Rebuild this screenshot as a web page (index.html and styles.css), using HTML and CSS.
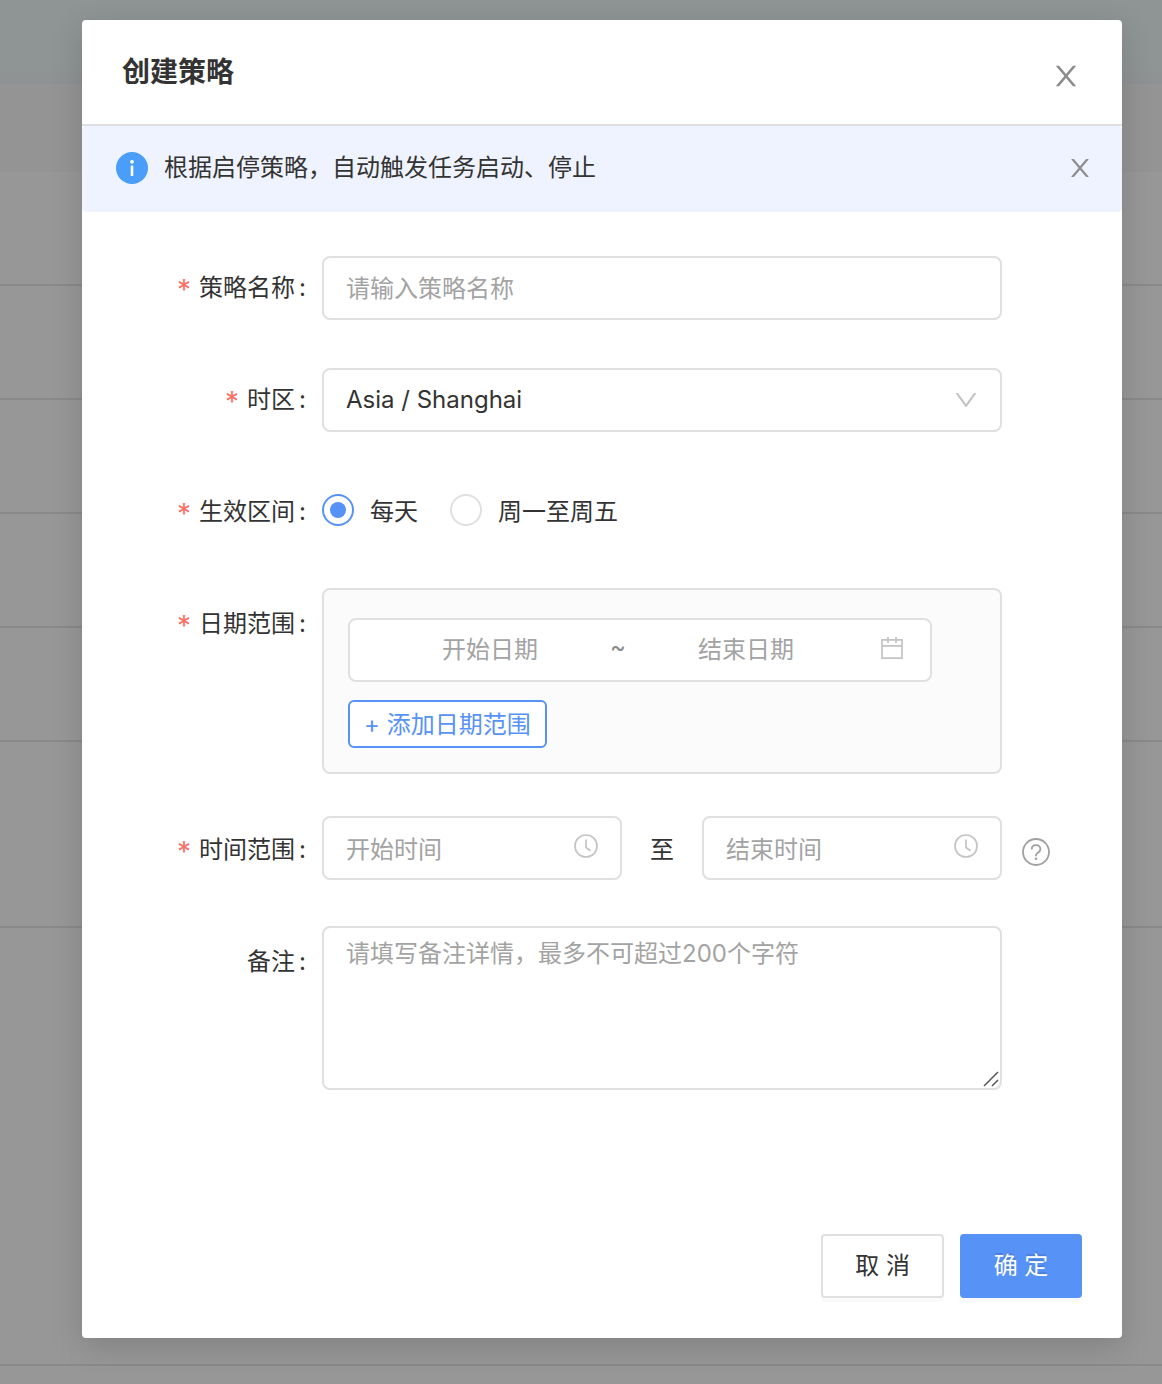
FILE: index.html
```html
<!DOCTYPE html>
<html lang="zh-CN">
<head>
<meta charset="utf-8">
<meta name="viewport" content="width=device-width, initial-scale=1">
<title>创建策略</title>
<link rel="stylesheet" href="styles.css">
</head>
<body>
<svg class="sprite" aria-hidden="true">
  <symbol id="close" viewBox="0 0 1024 1024"><path fill="currentColor" d="M563.8 512l262.5-312.9c4.4-5.2.7-13.1-6.1-13.1h-79.8c-4.7 0-9.2 2.1-12.3 5.7L511.6 449.8 295.1 191.7c-3-3.6-7.5-5.7-12.3-5.7H203c-6.8 0-10.5 7.9-6.1 13.1L459.4 512 196.9 824.9A7.95 7.95 0 0 0 203 838h79.8c4.7 0 9.2-2.1 12.3-5.7l216.5-258.1 216.5 258.1c3 3.6 7.5 5.7 12.3 5.7h79.8c6.8 0 10.5-7.9 6.1-13.1L563.8 512z"/></symbol>
  <symbol id="clock" viewBox="0 0 24 24"><g fill="none" stroke="currentColor" stroke-width="1.7"><circle cx="12" cy="12" r="11"/><path d="M12 5.5v8l4.5 3.2"/></g></symbol>
</svg>

<div class="page" aria-hidden="true">
  <div class="page-top"></div>
  <div class="page-head"></div>
  <div class="page-row"></div>
  <div class="page-row"></div>
  <div class="page-row"></div>
  <div class="page-row"></div>
  <div class="page-row"></div>
  <div class="page-row page-row-tall"></div>
  <div class="page-row page-row-rest"></div>
</div>

<div class="overlay">
  <form class="modal" role="dialog" aria-labelledby="title">
    <header class="modal-header">
      <h1 class="modal-title" id="title">创建策略</h1>
      <button class="icon-button modal-close" type="button" aria-label="关闭"><svg class="icon-large"><use href="#close"/></svg></button>
    </header>

    <div class="alert">
      <svg class="icon-large" viewBox="0 0 32 32"><circle cx="16" cy="16" r="16" fill="#4a9df8"/><circle cx="16" cy="9.8" r="1.9" fill="#fff"/><rect x="14.7" y="13.6" width="2.6" height="10.4" rx=".4" fill="#fff"/></svg>
      <p class="alert-text">根据启停策略，自动触发任务启动、停止</p>
      <button class="icon-button" type="button" aria-label="关闭提示"><svg class="icon-medium"><use href="#close"/></svg></button>
    </div>

    <div class="fields">
      <div class="row">
        <label class="label required" for="name">策略名称</label>
        <input class="control" id="name" type="text" placeholder="请输入策略名称">
      </div>

      <div class="row">
        <label class="label required" for="zone">时区</label>
        <div class="select-wrap">
          <select class="control" id="zone"><option>Asia / Shanghai</option></select>
          <svg class="select-arrow icon-medium" viewBox="0 0 1024 1024"><path fill="currentColor" d="M884 256h-75c-5.1 0-9.9 2.5-12.9 6.6L512 654.2 227.9 262.6c-3-4.1-7.8-6.6-12.9-6.6h-75c-6.5 0-10.3 7.4-6.5 12.7l352.6 486.1c12.8 17.6 39 17.6 51.7 0l352.6-486.1c3.9-5.3.1-12.7-6.4-12.7z"/></svg>
        </div>
      </div>

      <div class="row" role="radiogroup" aria-labelledby="period">
        <span class="label required" id="period">生效区间</span>
        <div class="radios">
          <label class="radio"><input type="radio" name="period" checked>每天</label>
          <label class="radio"><input type="radio" name="period">周一至周五</label>
        </div>
      </div>

      <div class="row row-date">
        <label class="label label-tall required" for="date-start">日期范围</label>
        <div class="date-panel">
          <div class="date-range">
            <input class="bare-input" id="date-start" type="text" placeholder="开始日期">
            <span class="tilde">~</span>
            <input class="bare-input" type="text" placeholder="结束日期" aria-label="结束日期">
            <svg class="icon-small" viewBox="0 0 24 24" fill="none" stroke="currentColor" stroke-width="1.7"><path d="M2 3.8h20v18.4H2zM2 9.8h20M8 1v6M16 1v6"/></svg>
          </div>
          <button class="add-button" type="button">+ 添加日期范围</button>
        </div>
      </div>

      <div class="row row-time">
        <label class="label label-tall required" for="time-start">时间范围</label>
        <div class="times">
          <div class="time-box">
            <input class="bare-input" id="time-start" type="text" placeholder="开始时间">
            <svg class="icon-small"><use href="#clock"/></svg>
          </div>
          <span class="to">至</span>
          <div class="time-box">
            <input class="bare-input" type="text" placeholder="结束时间" aria-label="结束时间">
            <svg class="icon-small"><use href="#clock"/></svg>
          </div>
        </div>
        <button class="icon-button help" type="button" aria-label="帮助"><svg class="icon-medium" viewBox="0 0 28 28" fill="none" stroke="currentColor" stroke-width="1.8"><circle cx="14" cy="14" r="13"/><path d="M9.700 11.400c0-2.600 1.800-4.200 4.300-4.200s4.400 1.600 4.400 3.900c0 1.900-1.100 2.900-2.500 3.600-1.300.7-1.900 1.300-1.900 2.600v1"/><circle cx="14" cy="20.800" r="1.300" fill="currentColor" stroke="none"/></svg></button>
      </div>

      <div class="row row-remark">
        <label class="label label-tall" for="remark">备注</label>
        <div class="remark-wrap">
          <textarea class="control remark" id="remark" placeholder="请填写备注详情，最多不可超过200个字符"></textarea>
          <svg class="grip" viewBox="0 0 16 16" stroke="#555" stroke-width="1.5"><path d="M1 15 15 1M9 15l6-6"/></svg>
        </div>
      </div>
    </div>

    <footer class="modal-footer">
      <button class="button" type="button">取 消</button>
      <button class="button button-primary" type="submit">确 定</button>
    </footer>
  </form>
</div>
</body>
</html>
```

FILE: styles.css
```css
* {
  box-sizing: border-box;
}

body {
  display: grid;
  min-height: 100vh;
  margin: 0;
  background: #979797;
  color: #333;
  font: 24px/36px Inter, "Noto Sans CJK SC", sans-serif;
}

button,
input,
select,
textarea {
  margin: 0;
  color: inherit;
  font: inherit;
}

button {
  cursor: pointer;
}

.sprite {
  display: none;
}

/* The page and the dialog share one grid cell. */
.page,
.overlay {
  grid-area: 1 / 1;
}

.page {
  display: flex;
  flex-direction: column;
}

.page-top {
  height: 84px;
  background: linear-gradient(#8f9494 80%, #909194);
}

.page-head {
  height: 88px;
  background: #949494;
}

.page-row {
  height: 114px;
  border-bottom: 2px solid #8a8a8a;
}

.page-row-tall {
  height: 186px;
}

.page-row-rest {
  height: 438px;
}

.overlay {
  padding: 20px 40px 46px 82px;
}

.modal {
  border-radius: 4px;
  background: #fff;
  box-shadow: 0 8px 32px rgba(0, 0, 0, .15);
}

.modal-header {
  display: flex;
  align-items: center;
  justify-content: space-between;
  height: 106px;
  padding: 0 40px;
  border-bottom: 2px solid #e0e0e0;
}

.modal-title {
  margin: 0;
  font-size: 28px;
  font-weight: 600;
  line-height: 40px;
}

.icon-button {
  display: flex;
  padding: 0;
  border: 0;
  background: none;
  color: #8c8c8c;
}

.modal-close {
  padding-top: 8px;
}

.icon-large {
  width: 32px;
  height: 32px;
}

.icon-medium {
  width: 28px;
  height: 28px;
}

.icon-small {
  flex: none;
  width: 24px;
  height: 24px;
  color: #c4c4c4;
}

.alert {
  display: flex;
  align-items: center;
  gap: 16px;
  height: 86px;
  padding: 0 28px 2px 34px;
  border-radius: 4px;
  background: #eff3ff;
}

.alert-text {
  flex: 1;
  margin: 0;
}

.fields {
  padding-top: 44px;
}

.row {
  display: grid;
  grid-template-columns: 240px minmax(0, 1fr) 120px;
}

.row + .row {
  margin-top: 48px;
}

.row + .row-date {
  margin-top: 44px;
}

.row + .row-time {
  margin-top: 42px;
}

.row + .row-remark {
  margin-top: 46px;
}

.label {
  height: 64px;
  padding-right: 16px;
  line-height: 64px;
  text-align: right;
}

.label::after {
  content: ":";
  margin-left: 4px;
}

.required::before {
  content: "*";
  margin-right: 8px;
  color: #f5736a;
  font-size: 28px;
  line-height: 1;
  vertical-align: -4px;
}

.label-tall {
  padding-top: 4px;
}

.row-time .label-tall {
  padding-top: 2px;
}

.control,
.date-range,
.time-box {
  width: 100%;
  height: 64px;
  border: 2px solid #e0e0e0;
  border-radius: 8px;
  background: #fff;
}

.control {
  display: block;
  padding: 0 22px;
}

::placeholder {
  color: #a3a3a3;
  opacity: 1;
}

.select-wrap,
.remark-wrap {
  position: relative;
}

select.control {
  appearance: none;
}

.select-arrow {
  position: absolute;
  top: 18px;
  right: 22px;
  color: #c4c4c4;
  pointer-events: none;
}

.radios {
  display: flex;
  align-items: center;
  gap: 32px;
  height: 64px;
}

.radio {
  display: flex;
  align-items: center;
  gap: 16px;
}

.radio input {
  display: grid;
  place-items: center;
  width: 32px;
  height: 32px;
  margin-bottom: 4px;
  border: 2px solid #e0e0e0;
  border-radius: 50%;
  appearance: none;
}

.radio input:checked {
  border-color: #5792f7;
}

.radio input:checked::after {
  content: "";
  width: 16px;
  height: 16px;
  border-radius: 50%;
  background: #5792f7;
}

.date-panel {
  padding: 28px 68px 24px 24px;
  border: 2px solid #e0e0e0;
  border-radius: 8px;
  background: #fbfbfb;
}

.date-range {
  display: grid;
  grid-template-columns: minmax(0, 1fr) 20px minmax(0, 1fr) 40px;
  align-items: center;
  padding: 0 26px 0 22px;
}

.date-range .bare-input,
.tilde {
  text-align: center;
}

.tilde {
  padding-bottom: 6px;
  color: #8c8c8c;
}

.date-range .icon-small {
  justify-self: end;
  margin-bottom: 4px;
}

.bare-input {
  flex: 1;
  min-width: 0;
  width: 100%;
  padding: 0;
  border: 0;
  background: none;
}

.add-button {
  display: block;
  height: 48px;
  margin-top: 18px;
  padding: 2px 14px 0;
  border: 2px solid #5792f7;
  border-radius: 6px;
  background: #fff;
  color: #5792f7;
}

.times {
  display: grid;
  grid-template-columns: minmax(0, 1fr) 80px minmax(0, 1fr);
  align-items: center;
}

.time-box {
  display: flex;
  align-items: center;
  padding: 0 22px;
}

.time-box .bare-input,
.to {
  padding-top: 4px;
}

.time-box .icon-small {
  margin-bottom: 4px;
}

.to {
  text-align: center;
}

.help {
  align-self: center;
  padding: 8px 20px 0;
  color: #a0a0a0;
}

.remark {
  height: 164px;
  padding: 8px 22px;
  resize: none;
}

.grip {
  position: absolute;
  right: 3px;
  bottom: 3px;
  width: 16px;
  height: 16px;
}

.modal-footer {
  display: flex;
  justify-content: flex-end;
  gap: 16px;
  padding: 144px 40px 40px;
}

.button {
  min-width: 122px;
  height: 64px;
  padding: 0 32px;
  border: 2px solid #e0e0e0;
  border-radius: 4px;
  background: #fff;
  box-shadow: 0 4px 0 rgba(0, 0, 0, .02);
}

.button-primary {
  padding: 0 30px;
  border-color: #5792f7;
  background: #5792f7;
  color: #fff;
  text-shadow: 0 -2px 0 rgba(0, 0, 0, .12);
}
```
